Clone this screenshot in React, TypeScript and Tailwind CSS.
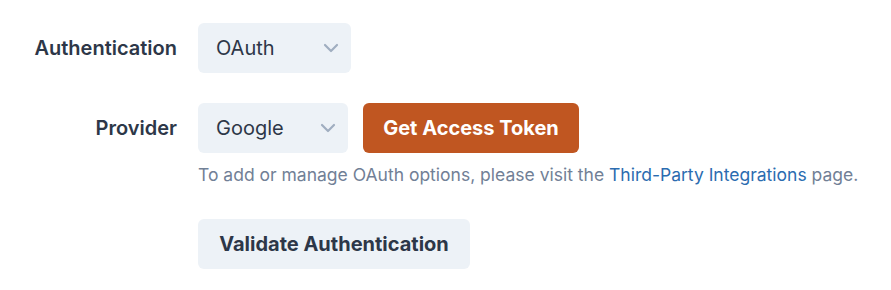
import { ChevronDown } from 'lucide-react'

function Select({ value, width }: { value: string; width: string }) {
  return (
    <div className={`relative flex items-center h-[50px] ${width} rounded-md bg-[#edf2f7] pl-[18px] text-[20px] text-[#2d3748]`}>
      <span>{value}</span>
      <ChevronDown className="absolute right-[8px] top-1/2 -translate-y-1/2 w-6 h-6 text-[#a0aec0]" strokeWidth={2.2} />
    </div>
  )
}

export default function App() {
  return (
    <div className="min-h-screen bg-white pt-[23px]" style={{ fontFamily: 'Inter, "Noto Sans", sans-serif' }}>
      {/* Authentication */}
      <div className="flex items-center">
        <label className="w-[177px] text-right text-[20px] font-semibold text-[#2d3748]">Authentication</label>
        <div className="ml-[21px]">
          <Select value="OAuth" width="w-[153px]" />
        </div>
      </div>

      {/* Provider */}
      <div className="flex items-center mt-[30px]">
        <label className="w-[177px] text-right text-[20px] font-semibold text-[#2d3748]">Provider</label>
        <div className="ml-[21px] flex items-center gap-[15px]">
          <Select value="Google" width="w-[150px]" />
          <button className="h-[50px] w-[216px] rounded-md bg-[#c05621] text-[20px] font-bold text-white">
            Get Access Token
          </button>
        </div>
      </div>

      <p className="ml-[198px] mt-[10px] text-[17.5px] leading-[24px] text-[#718096]">
        To add or manage OAuth options, please visit the{' '}
        <a className="text-[#2b6cb0]">Third-Party Integrations</a> page.
      </p>

      <div className="ml-[198px] mt-[32px]">
        <button className="h-[50px] w-[272px] rounded-md bg-[#edf2f7] text-[20px] font-bold text-[#2d3748]">
          Validate Authentication
        </button>
      </div>
    </div>
  )
}
